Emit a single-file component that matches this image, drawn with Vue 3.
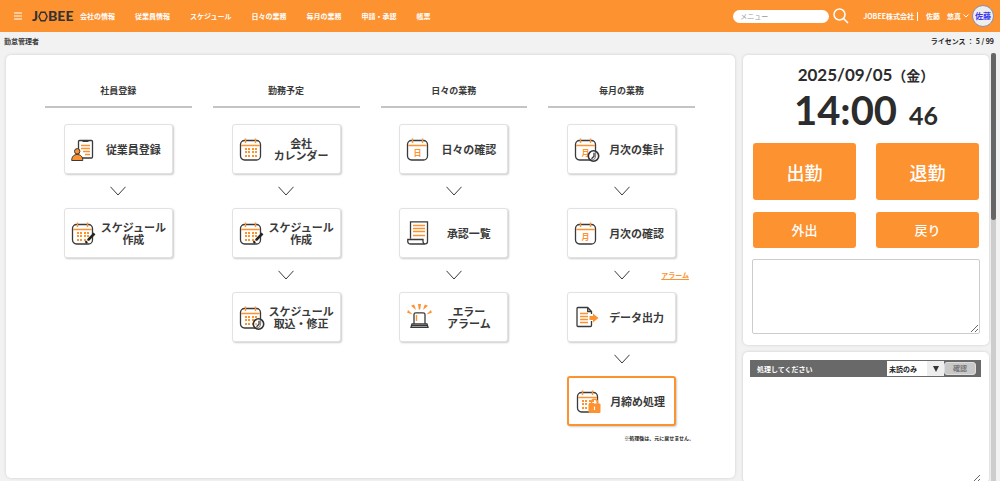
<script setup>
import { ref } from 'vue'

const navItems = ['会社の情報', '従業員情報', 'スケジュール', '日々の業務', '毎月の業務', '申請・承認', '帳票']

const columns = [
  {
    title: '社員登録',
    steps: [
      { label: '従業員登録', icon: 'person' },
      { label: 'スケジュール\n作成', icon: 'calendar', badge: 'pen' },
    ],
  },
  {
    title: '勤務予定',
    steps: [
      { label: '会社\nカレンダー', icon: 'calendar' },
      { label: 'スケジュール\n作成', icon: 'calendar', badge: 'pen' },
      { label: 'スケジュール\n取込・修正', icon: 'calendar', badge: 'clock' },
    ],
  },
  {
    title: '日々の業務',
    steps: [
      { label: '日々の確認', icon: 'calendar', mark: '日' },
      { label: '承認一覧', icon: 'scroll' },
      { label: 'エラー\nアラーム', icon: 'alarm' },
    ],
  },
  {
    title: '毎月の業務',
    note: '※処理後は、元に戻せません。',
    steps: [
      { label: '月次の集計', icon: 'calendar', mark: '月', badge: 'clock' },
      { label: '月次の確認', icon: 'calendar', mark: '月' },
      { label: 'データ出力', icon: 'export', link: 'アラーム' },
      { label: '月締め処理', icon: 'calendar', badge: 'lock', active: true },
    ],
  },
]

const dotXs = [6, 9, 13, 16]
const dotYs = [13, 16, 20]
const keyword = ref('')
const memo = ref('')
const message = ref('')
const filter = ref('unread')
</script>

<template>
  <div class="page">
    <header class="topbar">
      <button class="menu-button" type="button" aria-label="メニューを開く">
        <svg viewBox="0 0 8 8" width="8" height="8"><path d="M0 1H8M0 4H8M0 7H8" /></svg>
      </button>
      <a class="logo" href="#" aria-label="JOBEE">
        <span>J</span>
        <svg viewBox="0 0 10 11" width="10" height="11"><path d="M3 1.2H7L9.1 5.5L7 9.8H3L.9 5.5Z" /></svg>
        <span>BEE</span>
      </a>
      <nav class="nav">
        <a v-for="item in navItems" :key="item" href="#">{{ item }}</a>
      </nav>
      <div class="search">
        <input v-model="keyword" type="text" placeholder="メニュー" aria-label="メニュー" />
        <button type="button" aria-label="検索">
          <svg viewBox="0 0 16 16" width="16" height="16"><circle cx="6.5" cy="6.5" r="5.5" /><path d="M10.6 10.6L15 15" /></svg>
        </button>
      </div>
      <div class="account">
        <span class="company">JOBEE株式会社</span>
        <button class="user" type="button">
          <span>佐藤</span><span>悠真</span>
          <svg viewBox="0 0 6 4" width="6" height="4"><path d="M.5 .5L3 3L5.5 .5" /></svg>
        </button>
        <span class="avatar">佐藤</span>
      </div>
    </header>

    <div class="status">
      <span>勤怠管理者</span>
      <span class="license">ライセンス ： 5 / 99</span>
    </div>

    <main class="content">
      <section class="panel flow">
        <div v-for="col in columns" :key="col.title" class="column">
          <h2>{{ col.title }}</h2>
          <div v-for="(step, i) in col.steps" :key="i" class="step">
            <div v-if="i > 0" class="arrow">
              <svg viewBox="0 0 16 10" width="16" height="10"><path d="M.5 .8L8 9L15.5 .8" /></svg>
              <a v-if="step.link" href="#">{{ step.link }}</a>
            </div>
            <button type="button" class="tile" :class="{ active: step.active }">
              <svg class="icon" viewBox="0 0 28 28" width="28" height="28">
                <g v-if="step.icon === 'calendar'">
                  <rect class="dark" x="1.5" y="5.5" width="20" height="19.5" rx="4" />
                  <path class="orange" d="M2.2 10.5H20.8M6.5 3.5V8M16.5 3.5V8" />
                  <text v-if="step.mark" x="11.5" y="21" text-anchor="middle">{{ step.mark }}</text>
                  <template v-else>
                    <template v-for="y in dotYs" :key="y">
                      <rect v-for="x in dotXs" :key="x" class="fill" :x="x" :y="y" width="2" height="2" />
                    </template>
                  </template>
                </g>
                <g v-else-if="step.icon === 'person'">
                  <rect class="dark" x="7.5" y="5.5" width="14" height="17.5" rx="1" />
                  <path class="bar" d="M11.5 6H17.5" />
                  <path class="orange" d="M10 10.5H19M10 13.5H19M12 16.5H19M14 19.5H19" />
                  <path class="person" d="M.7 25.5C.7 21.5 3 19.5 6.2 19.5S11.8 21.5 11.8 25.5Z" />
                  <circle class="person" cx="6.2" cy="16.3" r="2.7" />
                </g>
                <g v-else-if="step.icon === 'scroll'">
                  <path class="dark" d="M4.5 19.5V2.8H21.5V22.5C21.5 25.5 17.5 25.8 17 22.8V20.5H1.8C1.4 23.4 2.4 25 4.3 25H19" />
                  <path class="orange" d="M7 6.5H19M7 9.5H19M7 12.5H19M7 16.5H19" />
                </g>
                <g v-else-if="step.icon === 'alarm'">
                  <path class="dark" d="M8 20.5V11.5C8 10.3 8.7 9.8 9.8 9.8H17.2C18.3 9.8 19 10.3 19 11.5V20.5M6 21H21L22 24.3H5ZM6 22.6H21" />
                  <path class="orange" d="M10.5 12V18" />
                  <path class="fill" d="M12 1H15L14.2 6.5H12.8ZM5 2.8L8.2 1.6L10 7ZM22 2.8L18.8 1.6L17 7ZM2 7L1.2 9.7L6.6 11.4ZM25 7L25.8 9.7L20.4 11.4Z" />
                </g>
                <g v-else>
                  <path class="dark" d="M17.5 18V22.5C17.5 23 17 23.5 16.5 23.5H4C3.3 23.5 3 23 3 22.5V5.5C3 4.9 3.4 4.5 4 4.5H13.7L17.5 8.5V11M13.7 4.5V8.5H17.5" />
                  <path class="orange" d="M6 10.5H14M6 13.5H14M6 16.5H14M6 19.5H14" />
                  <path class="fill" d="M15.5 13H19V10.5L24.5 15L19 19.5V17H15.5Z" />
                </g>
                <path v-if="step.badge === 'pen'" class="pen" d="M23.5 14.5L17 21.2M16 22.4L14.6 23.8" />
                <g v-if="step.badge === 'clock'">
                  <circle class="clock" cx="19.5" cy="21" r="5.2" />
                  <path class="dark" d="M20 17.7V21.3L17.5 23.7" />
                </g>
                <g v-if="step.badge === 'lock'">
                  <rect class="lock" x="12.5" y="16.5" width="12" height="9.5" rx="1" />
                  <path class="shackle" d="M15.5 17V15C15.5 11.3 21.5 11.3 21.5 15V17" />
                  <path class="keyhole" d="M18.5 19.5V23" />
                </g>
              </svg>
              <span class="label">{{ step.label }}</span>
            </button>
          </div>
          <p v-if="col.note">{{ col.note }}</p>
        </div>
      </section>

      <aside class="side">
        <section class="panel clock-panel">
          <div class="date">2025/09/05<span>（金）</span></div>
          <div class="time">14:00<small>46</small></div>
          <div class="punch">
            <button class="large" type="button">出勤</button>
            <button class="large" type="button">退勤</button>
            <button type="button">外出</button>
            <button type="button">戻り</button>
          </div>
          <textarea v-model="memo" aria-label="メモ"></textarea>
        </section>

        <section class="panel tasks">
          <div class="tasks-head">
            <span class="tasks-title">処理してください</span>
            <span class="picker">
              <select v-model="filter" aria-label="表示">
                <option value="unread">未読のみ</option>
                <option value="all">すべて</option>
              </select>
              <svg viewBox="0 0 6 6" width="6" height="6"><path d="M0 0H6L3 6Z" /></svg>
            </span>
            <button type="button">確認</button>
          </div>
          <textarea v-model="message" aria-label="通知内容"></textarea>
        </section>
      </aside>

      <div class="scrollbar"><div class="thumb"></div></div>
    </main>
  </div>
</template>

<style>
body {
  margin: 0;
  background: #f2f2f2;
}
</style>

<style scoped>
.page {
  --orange: #fd9230;
  --dark: #3a3a3a;
  display: flex;
  flex-direction: column;
  height: 100vh;
  overflow: hidden;
  background: #f2f2f2;
  color: #3a3a3a;
  font-family: "Noto Sans CJK JP", sans-serif;
  font-size: 7px;
  line-height: 10px;
  font-weight: 700;
}
*, *::before, *::after {
  box-sizing: border-box;
}
button, input, select, textarea {
  margin: 0;
  padding: 0;
  border: 0;
  background: none;
  color: inherit;
  font: inherit;
}
a {
  color: inherit;
  text-decoration: none;
}
svg {
  display: block;
  flex: none;
  fill: none;
  stroke: currentColor;
}

.topbar {
  display: flex;
  flex: none;
  align-items: center;
  height: 32px;
  padding: 0 6px 0 14px;
  background: var(--orange);
  color: #fff;
}
.menu-button {
  padding: 0 10px 0 0;
}
.logo {
  display: flex;
  align-items: center;
  width: 48px;
  color: #333;
  font-family: Lato, sans-serif;
  font-size: 14px;
  font-weight: 900;
  line-height: 16px;
}
.logo svg {
  stroke-width: 1.4;
}
.nav {
  display: flex;
  gap: 20px;
  margin-right: auto;
}
.search {
  display: flex;
  align-items: center;
  gap: 4px;
}
.search input {
  width: 96px;
  height: 13px;
  padding: 0 7px;
  border-radius: 7px;
  background: #fff;
  color: #333;
  font-weight: 400;
}
.search input::placeholder {
  color: #999;
}
.search svg {
  stroke-width: 1.5;
}
.account {
  display: flex;
  align-items: center;
  margin-left: 14px;
}
.company {
  padding-right: 3px;
  border-right: 1px solid #fff;
  line-height: 9px;
}
.user {
  display: flex;
  align-items: center;
  gap: 7px;
  margin-left: 8px;
}
.user svg {
  margin-left: -5px;
}
.avatar {
  width: 22px;
  height: 22px;
  margin-left: 3px;
  border: 1px solid #8b8bb0;
  border-radius: 50%;
  background: #eee;
  color: #3838f0;
  font-size: 8px;
  line-height: 20px;
  text-align: center;
}

.status {
  display: flex;
  flex: none;
  justify-content: space-between;
  height: 21px;
  padding: 4px 6px 0 4px;
}
.license {
  color: #222;
}

.content {
  display: flex;
  flex: 1;
  min-height: 0;
  padding: 0 4px 0 6px;
}
.panel {
  border-radius: 5px;
  background: #fff;
  box-shadow: 0 0 3px #ccc;
}
.flow {
  display: grid;
  flex: 1;
  grid-template-columns: repeat(4, 1fr);
  gap: 21px;
  margin: 2px 6px 3px 0;
  padding: 25px 40px 0 39px;
}
.column {
  display: flex;
  flex-direction: column;
  align-items: center;
}
h2 {
  width: 100%;
  margin: 0 0 16px;
  padding: 5px 0 9px;
  border-bottom: 2px solid #c4c4c4;
  font-size: 9px;
  line-height: 12px;
  text-align: center;
}
.step {
  display: flex;
  flex-direction: column;
  align-items: center;
  width: 100%;
}
.arrow {
  position: relative;
  display: flex;
  align-items: center;
  justify-content: center;
  width: 100%;
  height: 34px;
}
.arrow a {
  position: absolute;
  right: 6px;
  color: var(--orange);
  text-decoration: underline;
}
.tile {
  display: flex;
  align-items: center;
  width: 109px;
  height: 50px;
  padding: 0 4px 0 6px;
  border: 1px solid #e2e2e2;
  border-radius: 3px;
  background: #fff;
  box-shadow: 1px 1px 2px #ccc;
  cursor: pointer;
}
.tile.active {
  border: 2px solid var(--orange);
  padding: 0 3px 0 7px;
}
.label {
  flex: 1;
  font-size: 11px;
  line-height: 12px;
  text-align: center;
  white-space: pre;
}
.column p {
  align-self: flex-end;
  margin: 7px 1px 0;
  color: #222;
  font-size: 5px;
}

.dark {
  fill: none;
  stroke: var(--dark);
  stroke-width: 1.3;
}
.orange {
  stroke: var(--orange);
  stroke-width: 1.4;
}
.bar {
  stroke: var(--dark);
  stroke-width: 2;
}
.fill {
  fill: var(--orange);
  stroke: none;
}
.icon text {
  fill: var(--orange);
  stroke: none;
  font-size: 8px;
}
.person {
  fill: var(--orange);
  stroke: var(--dark);
}
.pen {
  stroke: #222;
  stroke-width: 2.6;
}
.clock {
  fill: #fff;
  fill-opacity: 0.4;
  stroke: #333;
  stroke-width: 1.6;
}
.lock {
  fill: var(--orange);
  stroke: none;
}
.shackle {
  stroke: var(--orange);
  stroke-width: 1.6;
}
.keyhole {
  stroke: #fff;
  stroke-width: 1.2;
}

.side {
  display: flex;
  flex: none;
  flex-direction: column;
  gap: 7px;
  width: 250px;
  padding: 2px 2px 0;
  overflow: hidden;
}
.clock-panel {
  padding: 9px 9px 11px;
}
.date {
  color: #2c2c2c;
  font-family: Lato, sans-serif;
  font-size: 17px;
  line-height: 21px;
  text-align: center;
}
.date span {
  font-family: "Noto Sans CJK JP", sans-serif;
  font-size: 14px;
  line-height: 14px;
}
.time {
  display: flex;
  align-items: baseline;
  justify-content: center;
  gap: 12px;
  height: 50px;
  color: #2c2c2c;
  font-family: Lato, sans-serif;
  font-size: 40px;
  line-height: 50px;
}
.time small {
  font-size: 25px;
  line-height: 25px;
}
.punch {
  display: grid;
  grid-template-columns: 1fr 1fr;
  gap: 12px 20px;
  margin: 8px 1px 11px;
}
.punch button {
  height: 36px;
  border-radius: 3px;
  background: var(--orange);
  color: #fff;
  font-size: 13px;
  font-weight: 500;
}
.punch .large {
  height: 57px;
  font-size: 18px;
}
.clock-panel textarea {
  display: block;
  width: 100%;
  height: 75px;
  border: 1px solid #ccc;
  border-radius: 2px;
  background: #fff;
}
.tasks {
  padding: 8px 8px 0 7px;
}
.tasks-head {
  display: flex;
  align-items: center;
  height: 17px;
  padding-right: 5px;
  background: #696969;
}
.tasks-title {
  flex: 1;
  padding-left: 7px;
  color: #fff;
}
.picker {
  display: flex;
  align-items: center;
  width: 57px;
  height: 15px;
  padding-right: 5px;
  background: linear-gradient(90deg, #fff 40px, #eee 40px);
  color: #222;
}
.picker select {
  flex: 1;
  min-width: 0;
  padding-left: 2px;
  appearance: none;
}
.picker svg {
  fill: #333;
  stroke: none;
}
.tasks-head button {
  width: 32px;
  height: 13px;
  border: 1px solid #ddd;
  border-radius: 3px;
  background: #c8c8c8;
  color: #777;
  line-height: 11px;
}
.tasks textarea {
  display: block;
  width: 100%;
  height: 106px;
}
.scrollbar {
  width: 5px;
  margin-left: auto;
  background: #cdcdcd;
}
.thumb {
  height: 39%;
  border-radius: 3px;
  background: #666;
}
</style>
